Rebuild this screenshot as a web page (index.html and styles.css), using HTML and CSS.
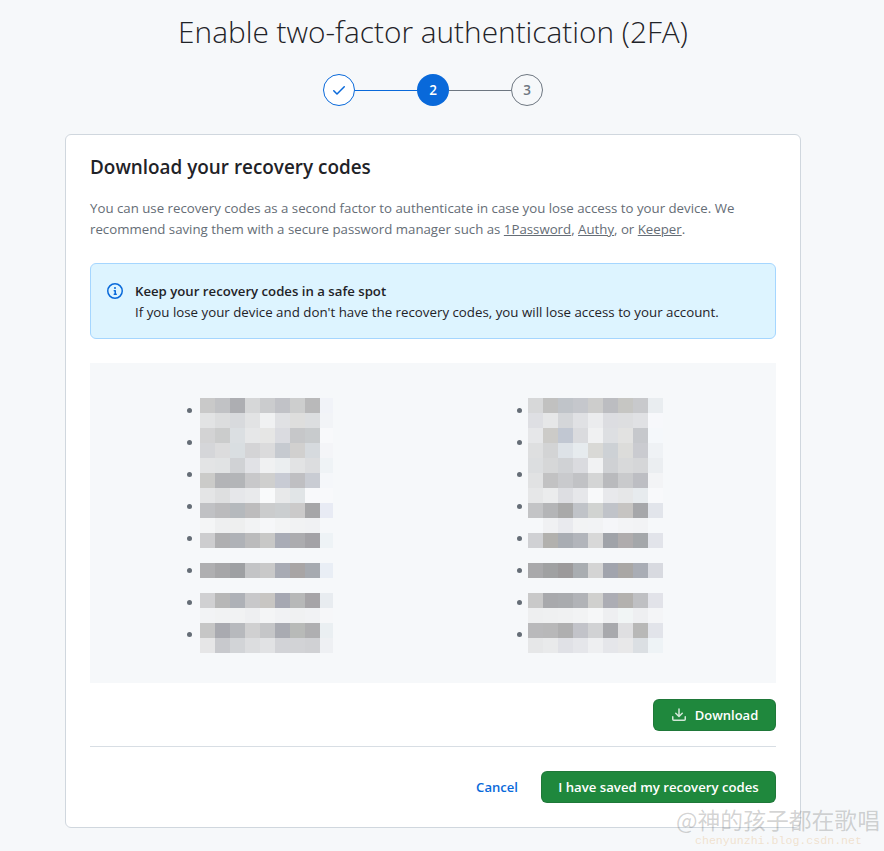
FILE: index.html
```html
<!DOCTYPE html>
<html lang="en">
<head>
    <meta charset="UTF-8">
    <meta name="viewport" content="width=device-width, initial-scale=1.0">
    <title>Enable two-factor authentication (2FA)</title>
    <link rel="stylesheet" href="styles.css">
</head>
<body>

<main class="page">
    <h1 class="page-title">Enable two-factor authentication (2FA)</h1>

    <!-- Pasos -->
    <ol class="stepper">
        <li class="step step-done">
            <svg class="icon" viewBox="0 0 16 16" aria-hidden="true"><path d="M13.78 4.22a.75.75 0 0 1 0 1.06l-7.25 7.25a.75.75 0 0 1-1.06 0L2.22 9.28a.751.751 0 0 1 .018-1.042.751.751 0 0 1 1.042-.018L6 10.94l6.72-6.72a.75.75 0 0 1 1.06 0Z"/></svg>
        </li>
        <li class="step-line step-line-done"></li>
        <li class="step step-current">2</li>
        <li class="step-line"></li>
        <li class="step step-next">3</li>
    </ol>

    <section class="card">
        <h2 class="card-title">Download your recovery codes</h2>
        <p class="card-text">You can use recovery codes as a second factor to authenticate in case you lose access to your device. We recommend saving them with a secure password manager such as <a href="#">1Password</a>, <a href="#">Authy</a>, or <a href="#">Keeper</a>.</p>

        <div class="flash">
            <svg class="icon flash-icon" viewBox="0 0 16 16" aria-hidden="true"><path d="M0 8a8 8 0 1 1 16 0A8 8 0 0 1 0 8Zm8-6.5a6.5 6.5 0 1 0 0 13 6.5 6.5 0 0 0 0-13ZM6.5 7.75A.75.75 0 0 1 7.25 7h1a.75.75 0 0 1 .75.75v2.75h.25a.75.75 0 0 1 0 1.5h-2a.75.75 0 0 1 0-1.5h.25v-2h-.25a.75.75 0 0 1-.75-.75ZM8 6a1 1 0 1 1 0-2 1 1 0 0 1 0 2Z"/></svg>
            <div>
                <strong class="flash-title">Keep your recovery codes in a safe spot</strong>
                <p>If you lose your device and don't have the recovery codes, you will lose access to your account.</p>
            </div>
        </div>

        <!-- Codigos pixelados -->
        <div class="codes">
            <div class="code-col code-col-left">
                <div class="bullets"><i></i><i></i><i></i><i></i><i></i><i></i><i></i><i></i></div>
                <svg class="mosaic" width="133" height="255" shape-rendering="crispEdges" aria-hidden="true">
                    <g><rect x="0" fill="#c9c9c9"/><rect x="15" fill="#c1c2c5"/><rect x="30" fill="#adaeb2"/><rect x="45" fill="#d6d7d8"/><rect x="60" fill="#cbccce"/><rect x="75" fill="#c1c2c7"/><rect x="90" fill="#cdcece"/><rect x="105" fill="#b9b9ba"/><rect x="120" fill="#f1f3f8"/></g>
                    <g transform="translate(0 15)"><rect x="0" fill="#e2e3e4"/><rect x="15" fill="#dcddde"/><rect x="30" fill="#d8dadd"/><rect x="45" fill="#e2e3e4"/><rect x="60" fill="#f0f1f2"/><rect x="75" fill="#e0e1e4"/><rect x="90" fill="#dededd"/><rect x="105" fill="#dcdee0"/><rect x="120" fill="#f2f4f7"/></g>
                    <g transform="translate(0 30)"><rect x="0" fill="#d3d3d4"/><rect x="15" fill="#cbcccc"/><rect x="30" fill="#dbdfe2"/><rect x="45" fill="#e6e7e8"/><rect x="60" fill="#e6e6e5"/><rect x="75" fill="#dadbe0"/><rect x="90" fill="#c6c7c9"/><rect x="105" fill="#c8cbcd"/><rect x="120" fill="#f8f9fb"/></g>
                    <g transform="translate(0 45)"><rect x="0" fill="#d5d6d9"/><rect x="15" fill="#dcdcdd"/><rect x="30" fill="#d9dee1"/><rect x="45" fill="#d4d4d6"/><rect x="60" fill="#dbdbdc"/><rect x="75" fill="#c6cad0"/><rect x="90" fill="#d1d0cf"/><rect x="105" fill="#d6dade"/><rect x="120" fill="#f4f5f8"/></g>
                    <g transform="translate(0 60)"><rect x="0" fill="#e3e4e5"/><rect x="15" fill="#e1e3e4"/><rect x="30" fill="#d0d2d5"/><rect x="45" fill="#e1e2e6"/><rect x="60" fill="#f0f1f2"/><rect x="75" fill="#ebeef0"/><rect x="90" fill="#e2e3e4"/><rect x="105" fill="#dcdddf"/><rect x="120" fill="#eff3f6"/></g>
                    <g transform="translate(0 75)"><rect x="0" fill="#cbcbc9"/><rect x="15" fill="#b3b4b7"/><rect x="30" fill="#b3b5b8"/><rect x="45" fill="#c8c8ca"/><rect x="60" fill="#cfcfce"/><rect x="75" fill="#c8cbd4"/><rect x="90" fill="#bfbfc2"/><rect x="105" fill="#c9ccd3"/><rect x="120" fill="#f5f7fa"/></g>
                    <g transform="translate(0 90)"><rect x="0" fill="#e4e5e6"/><rect x="15" fill="#dedfe0"/><rect x="30" fill="#e6e7ea"/><rect x="45" fill="#e9eaec"/><rect x="60" fill="#f9fafb"/><rect x="75" fill="#e8e9ea"/><rect x="90" fill="#e1e5e7"/><rect x="105" fill="#f8f9fb"/><rect x="120" fill="#f8f9fb"/></g>
                    <g transform="translate(0 105)"><rect x="0" fill="#c0c1c4"/><rect x="15" fill="#bbbbbd"/><rect x="30" fill="#b5b9bd"/><rect x="45" fill="#bdbcbd"/><rect x="60" fill="#cbcccd"/><rect x="75" fill="#cbced0"/><rect x="90" fill="#cbcaca"/><rect x="105" fill="#a6a6a8"/><rect x="120" fill="#e8ebf4"/></g>
                    <g transform="translate(0 120)"><rect x="0" fill="#f4f5f6"/><rect x="15" fill="#eeeff0"/><rect x="30" fill="#eeefef"/><rect x="45" fill="#f2f3f4"/><rect x="60" fill="#f6f7f9"/><rect x="75" fill="#f3f4f5"/><rect x="90" fill="#f1f2f3"/><rect x="105" fill="#f0f1f3"/><rect x="120" fill="#f6f8fa"/></g>
                    <g transform="translate(0 135)"><rect x="0" fill="#cdcdcf"/><rect x="15" fill="#afafb1"/><rect x="30" fill="#afb2b7"/><rect x="45" fill="#bbbbbc"/><rect x="60" fill="#c8c8c7"/><rect x="75" fill="#a9acb6"/><rect x="90" fill="#acacaf"/><rect x="105" fill="#a3a2a6"/><rect x="120" fill="#eef3f6"/></g>
                    <g transform="translate(0 165)"><rect x="0" fill="#afafb1"/><rect x="15" fill="#a6a6a8"/><rect x="30" fill="#9ea0a3"/><rect x="45" fill="#c3c4c6"/><rect x="60" fill="#c9c9c9"/><rect x="75" fill="#a8abb4"/><rect x="90" fill="#a8a5a5"/><rect x="105" fill="#a6aab0"/><rect x="120" fill="#e9eef5"/></g>
                    <g transform="translate(0 195)"><rect x="0" fill="#d0d0d2"/><rect x="15" fill="#b7b7b7"/><rect x="30" fill="#aeb1b7"/><rect x="45" fill="#c8c8ca"/><rect x="60" fill="#c8c6c3"/><rect x="75" fill="#a6a8b2"/><rect x="90" fill="#b7b8b8"/><rect x="105" fill="#a6a4a7"/><rect x="120" fill="#e8ecf0"/></g>
                    <g transform="translate(0 210)"><rect x="0" fill="#f2f3f5"/><rect x="15" fill="#f1f2f3"/><rect x="30" fill="#f1f2f3"/><rect x="45" fill="#eeeff1"/><rect x="60" fill="#f4f5f6"/><rect x="75" fill="#f1f2f4"/><rect x="90" fill="#f0f1f2"/><rect x="105" fill="#f1f2f4"/><rect x="120" fill="#f6f7f9"/></g>
                    <g transform="translate(0 225)"><rect x="0" fill="#c6c6c6"/><rect x="15" fill="#a9aab0"/><rect x="30" fill="#b7b9bd"/><rect x="45" fill="#d0d0d1"/><rect x="60" fill="#c5c6c8"/><rect x="75" fill="#a9abb2"/><rect x="90" fill="#b8bab8"/><rect x="105" fill="#afafb1"/><rect x="120" fill="#eaeff2"/></g>
                    <g transform="translate(0 240)"><rect x="0" fill="#e6e6e7"/><rect x="15" fill="#c8c9cd"/><rect x="30" fill="#d2d4d7"/><rect x="45" fill="#dcdddf"/><rect x="60" fill="#e1e2e4"/><rect x="75" fill="#d2d3d7"/><rect x="90" fill="#d2d3d6"/><rect x="105" fill="#d0d1d4"/><rect x="120" fill="#eef0f3"/></g>
                </svg>
            </div>
            <div class="code-col code-col-right">
                <div class="bullets"><i></i><i></i><i></i><i></i><i></i><i></i><i></i><i></i></div>
                <svg class="mosaic" width="135" height="255" shape-rendering="crispEdges" aria-hidden="true">
                    <g><rect x="0" fill="#d7d8d9"/><rect x="15" fill="#c1c1c0"/><rect x="30" fill="#c0c4c9"/><rect x="45" fill="#c5c7cc"/><rect x="60" fill="#cdcdcc"/><rect x="75" fill="#bcbdc1"/><rect x="90" fill="#c6c6c3"/><rect x="105" fill="#c8c9cc"/><rect x="120" fill="#e9edf0"/></g>
                    <g transform="translate(0 15)"><rect x="0" fill="#dedfe3"/><rect x="15" fill="#e6e7e8"/><rect x="30" fill="#d4d6d9"/><rect x="45" fill="#e0e1e4"/><rect x="60" fill="#ebecee"/><rect x="75" fill="#dcdde1"/><rect x="90" fill="#dddee0"/><rect x="105" fill="#e0e1e4"/><rect x="120" fill="#f7f8fb"/></g>
                    <g transform="translate(0 30)"><rect x="0" fill="#e6e7e9"/><rect x="15" fill="#cccbc8"/><rect x="30" fill="#c1c7d2"/><rect x="45" fill="#dadbde"/><rect x="60" fill="#f0f1f2"/><rect x="75" fill="#dddfe2"/><rect x="90" fill="#e2e2e1"/><rect x="105" fill="#c6c8cc"/><rect x="120" fill="#f5f8fb"/></g>
                    <g transform="translate(0 45)"><rect x="0" fill="#dedfe0"/><rect x="15" fill="#d3d4d5"/><rect x="30" fill="#dde2e7"/><rect x="45" fill="#e6ebee"/><rect x="60" fill="#d9d9d6"/><rect x="75" fill="#cdd1d5"/><rect x="90" fill="#dcdcda"/><rect x="105" fill="#cacbd0"/><rect x="120" fill="#eff2f5"/></g>
                    <g transform="translate(0 60)"><rect x="0" fill="#dcdee0"/><rect x="15" fill="#d6d7d8"/><rect x="30" fill="#d0d2d5"/><rect x="45" fill="#dadbdf"/><rect x="60" fill="#f1f2f3"/><rect x="75" fill="#cfd1d4"/><rect x="90" fill="#d8d9da"/><rect x="105" fill="#d5d6d8"/><rect x="120" fill="#ebeef1"/></g>
                    <g transform="translate(0 75)"><rect x="0" fill="#e1e2e3"/><rect x="15" fill="#c2c2c3"/><rect x="30" fill="#c9cacd"/><rect x="45" fill="#c1c2c5"/><rect x="60" fill="#d4d5d5"/><rect x="75" fill="#b9babd"/><rect x="90" fill="#c9cacc"/><rect x="105" fill="#bdbec3"/><rect x="120" fill="#f3f4f6"/></g>
                    <g transform="translate(0 90)"><rect x="0" fill="#e6e7e8"/><rect x="15" fill="#ebeced"/><rect x="30" fill="#dddee2"/><rect x="45" fill="#e6e7ea"/><rect x="60" fill="#f8f9fa"/><rect x="75" fill="#e8e9ec"/><rect x="90" fill="#e6e7e8"/><rect x="105" fill="#e7ebee"/><rect x="120" fill="#f8f9fb"/></g>
                    <g transform="translate(0 105)"><rect x="0" fill="#c3c4c6"/><rect x="15" fill="#b4b5b7"/><rect x="30" fill="#a9a9a9"/><rect x="45" fill="#c0c3c8"/><rect x="60" fill="#d1d3d1"/><rect x="75" fill="#c0c3c9"/><rect x="90" fill="#c6c4c2"/><rect x="105" fill="#a6a7aa"/><rect x="120" fill="#e2e5eb"/></g>
                    <g transform="translate(0 120)"><rect x="0" fill="#f6f8fa"/><rect x="15" fill="#f0f1f3"/><rect x="30" fill="#e9eaee"/><rect x="45" fill="#f2f3f4"/><rect x="60" fill="#f2f3f5"/><rect x="75" fill="#f5f6f9"/><rect x="90" fill="#f3f4f6"/><rect x="105" fill="#f2f3f5"/><rect x="120" fill="#f6f8fa"/></g>
                    <g transform="translate(0 135)"><rect x="0" fill="#d0d1d4"/><rect x="15" fill="#b2b1ae"/><rect x="30" fill="#a9adb3"/><rect x="45" fill="#b2b5bb"/><rect x="60" fill="#d8d8d8"/><rect x="75" fill="#a0a3a9"/><rect x="90" fill="#afacad"/><rect x="105" fill="#a4a7aa"/><rect x="120" fill="#e2e4ea"/></g>
                    <g transform="translate(0 165)"><rect x="0" fill="#a9a9ab"/><rect x="15" fill="#a0a1a2"/><rect x="30" fill="#9c9a9b"/><rect x="45" fill="#a9adb1"/><rect x="60" fill="#d4d4d4"/><rect x="75" fill="#a1a4ad"/><rect x="90" fill="#a9a7a5"/><rect x="105" fill="#a9adb5"/><rect x="120" fill="#d8dae0"/></g>
                    <g transform="translate(0 195)"><rect x="0" fill="#c9c9c9"/><rect x="15" fill="#a8a9ac"/><rect x="30" fill="#a9abae"/><rect x="45" fill="#b1b3b7"/><rect x="60" fill="#d0d0ce"/><rect x="75" fill="#acadb4"/><rect x="90" fill="#b3b1ae"/><rect x="105" fill="#bfc0c3"/><rect x="120" fill="#e2e3e9"/></g>
                    <g transform="translate(0 210)"><rect x="0" fill="#eeeff0"/><rect x="15" fill="#eff0f1"/><rect x="30" fill="#f0f1f2"/><rect x="45" fill="#f2f3f4"/><rect x="60" fill="#f6f7f8"/><rect x="75" fill="#eeeff1"/><rect x="90" fill="#f1f5f5"/><rect x="105" fill="#eeeff1"/><rect x="120" fill="#f4f5f7"/></g>
                    <g transform="translate(0 225)"><rect x="0" fill="#b9b9bb"/><rect x="15" fill="#b8b8b9"/><rect x="30" fill="#afafb0"/><rect x="45" fill="#c2c3c9"/><rect x="60" fill="#d1d2d4"/><rect x="75" fill="#a8a9ad"/><rect x="90" fill="#dfdfe1"/><rect x="105" fill="#b8b8b7"/><rect x="120" fill="#e2e4ea"/></g>
                    <g transform="translate(0 240)"><rect x="0" fill="#e6e7e8"/><rect x="15" fill="#e9eaeb"/><rect x="30" fill="#e0e1e6"/><rect x="45" fill="#e5e6ea"/><rect x="60" fill="#eeeff1"/><rect x="75" fill="#e5e6ea"/><rect x="90" fill="#e8e8e9"/><rect x="105" fill="#dbdfe3"/><rect x="120" fill="#eef3f6"/></g>
                </svg>
            </div>
        </div>

        <div class="download-row">
            <button class="btn">
                <svg class="icon btn-icon" viewBox="0 0 16 16" aria-hidden="true"><path d="M2.75 14A1.75 1.75 0 0 1 1 12.25v-2.5a.75.75 0 0 1 1.5 0v2.5c0 .138.112.25.25.25h10.5a.25.25 0 0 0 .25-.25v-2.5a.75.75 0 0 1 1.5 0v2.5A1.75 1.75 0 0 1 13.25 14Z"/><path d="M7.25 7.689V2a.75.75 0 0 1 1.5 0v5.689l1.97-1.969a.749.749 0 1 1 1.06 1.06l-3.25 3.25a.749.749 0 0 1-1.06 0L4.22 6.78a.749.749 0 1 1 1.06-1.06l1.97 1.969Z"/></svg>
                Download
            </button>
        </div>

        <div class="card-footer">
            <a class="cancel" href="#">Cancel</a>
            <button class="btn btn-wide">I have saved my recovery codes</button>
        </div>
    </section>
</main>

<!-- Marca de agua -->
<div class="watermark">
    <div class="watermark-name">@神的孩子都在歌唱</div>
    <div class="watermark-url">chenyunzhi.blog.csdn.net</div>
</div>

</body>
</html>
```

FILE: styles.css
```css
/* General */
* {
    margin: 0;
    padding: 0;
    box-sizing: border-box;
}
body {
    font-family: "Open Sans", "Noto Sans", Arial, sans-serif;
    font-size: 13.3px;
    line-height: 21px;
    color: #1f2328;
    background-color: #f6f8fa;
    height: 851px;
    overflow: hidden;
    position: relative;
}
.page {
    width: 736px;
    margin-left: 65px;
}
.icon {
    width: 16px;
    height: 16px;
    fill: currentColor;
    display: block;
}

/* Titulo y pasos */
.page-title {
    font-size: 29.8px;
    font-weight: 300;
    line-height: 42px;
    padding-top: 11px;
    text-align: center;
    white-space: nowrap;
}
.stepper {
    list-style: none;
    display: flex;
    justify-content: center;
    align-items: center;
    margin-top: 21px;
}
.step {
    width: 32px;
    height: 32px;
    border-radius: 50%;
    display: flex;
    align-items: center;
    justify-content: center;
    font-weight: 600;
    font-size: 13.5px;
}
.step-done {
    border: 1px solid #0969da;
    color: #0969da;
    background-color: #fff;
}
.step-current {
    background-color: #0969da;
    color: #fff;
}
.step-next {
    border: 1px solid #6e7781;
    color: #6e7781;
}
.step-line {
    width: 62px;
    height: 1px;
    background-color: #6e7781;
}
.step-line-done {
    background-color: #0969da;
}

/* Tarjeta */
.card {
    margin-top: 28px;
    height: 694px;
    background-color: #fff;
    border: 1px solid #d0d7de;
    border-radius: 6px;
    padding: 19px 24px 0;
}
.card-title {
    font-size: 18.9px;
    font-weight: 600;
    line-height: 26px;
}
.card-text {
    margin-top: 18px;
    font-size: 13.26px;
    color: #656d76;
}
.card-text a {
    color: #656d76;
}

/* Aviso */
.flash {
    margin-top: 23px;
    height: 76px;
    display: flex;
    align-items: flex-start;
    gap: 12px;
    padding: 17px 16px 0;
    background-color: #ddf4ff;
    border: 1px solid #a5d6ff;
    border-radius: 6px;
}
.flash-icon {
    color: #0969da;
    margin-top: 2px;
}
.flash-title {
    font-size: 13.2px;
    font-weight: 600;
    display: block;
}

/* Codigos */
.codes {
    margin-top: 24px;
    height: 320px;
    background-color: #f6f8fa;
    display: flex;
    padding-top: 35px;
}
.code-col {
    display: flex;
}
.code-col-left {
    gap: 8px;
    margin-left: 97px;
}
.code-col-right {
    gap: 6px;
    margin-left: 184px;
}
.bullets {
    display: flex;
    flex-direction: column;
    gap: 27px;
    padding-top: 10px;
    width: 5px;
}
.bullets i {
    display: block;
    width: 5px;
    height: 5px;
    border-radius: 50%;
    background-color: #656d76;
}
.mosaic {
    display: block;
}
.mosaic rect {
    width: 15px;
    height: 15px;
}

/* Botones */
.btn {
    height: 32px;
    display: inline-flex;
    align-items: center;
    justify-content: center;
    gap: 8px;
    font-family: inherit;
    font-size: 13.2px;
    font-weight: 600;
    color: #fff;
    background-color: #1f883d;
    border: 1px solid rgba(31, 35, 40, 0.15);
    border-radius: 6px;
    cursor: pointer;
}
.btn-icon {
    opacity: 0.8;
}
.download-row {
    margin-top: 16px;
    display: flex;
    justify-content: flex-end;
    padding-bottom: 15px;
    border-bottom: 1px solid #d8dee4;
}
.download-row .btn {
    width: 123px;
    font-size: 13px;
}
.card-footer {
    margin-top: 24px;
    display: flex;
    justify-content: flex-end;
    align-items: center;
    gap: 23px;
}
.cancel {
    color: #0969da;
    font-size: 13.1px;
    font-weight: 600;
    text-decoration: none;
}
.btn-wide {
    width: 235px;
}

/* Marca de agua */
.watermark {
    position: absolute;
    left: 676px;
    top: 806px;
    white-space: nowrap;
}
.watermark-name {
    font-family: "Noto Sans CJK SC", sans-serif;
    font-size: 22.8px;
    line-height: 28px;
    color: rgba(120, 120, 120, 0.32);
}
.watermark-url {
    font-family: "Liberation Mono", monospace;
    font-size: 11.6px;
    line-height: 13px;
    margin-left: 19px;
    color: rgba(230, 190, 140, 0.4);
}
```
